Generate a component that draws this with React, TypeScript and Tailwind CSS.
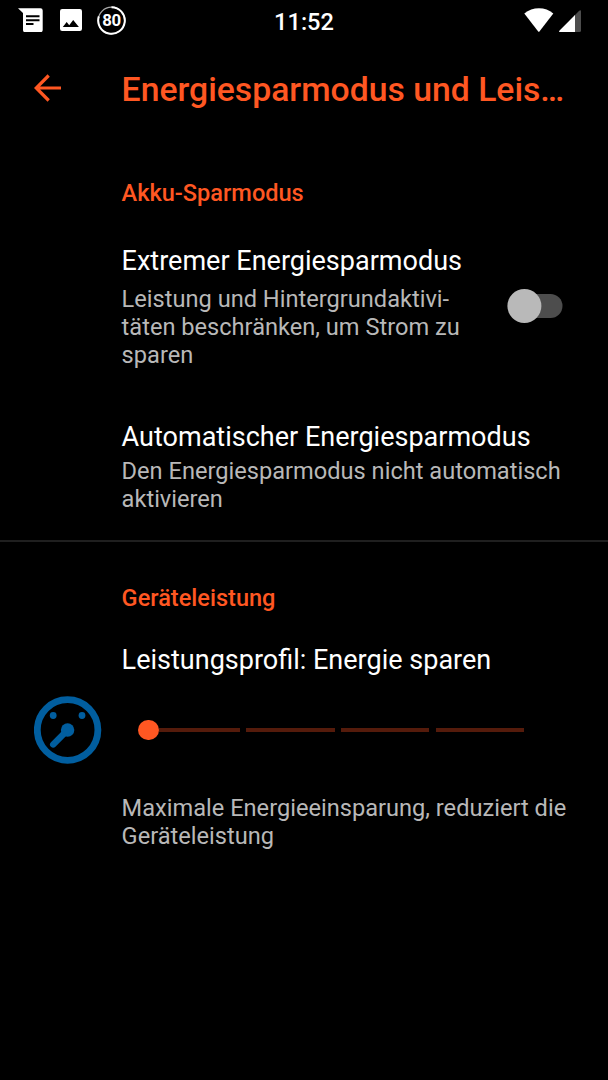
import React, { useState } from "react";

const StatusBar = () => (
  <header className="flex h-[42px] items-start justify-between pr-[27px] pl-[18px]">
    <div className="flex w-[240px] items-start">
      {/* Message */}
      <svg className="mt-2 h-6 w-[25px]" viewBox="0 0 25 24" fill="none">
        <path d="M0 0.3H22.5Q24.7 0.3 24.7 2.5V22Q24.7 24.2 22.5 24.2H7Q5 24.2 5 22V5Z" fill="#fff" />
        <path d="M8 8.3H21.5M8 12.2H21.5M8 16H15.5" stroke="#000" strokeWidth="1.9" />
      </svg>
      {/* Picture */}
      <svg className="mt-[9px] ml-[17px] h-[22px] w-[22px]" viewBox="0 0 22 22">
        <rect width="22" height="22" rx="2.2" fill="#fff" />
        <path d="M2.8 18L6.7 13L9.2 16.2L13.2 11L18.9 18Z" fill="#000" />
      </svg>
      {/* Battery ring */}
      <div className="mt-[6px] ml-[15px] grid h-[29px] w-[29px] place-items-center">
        <svg className="col-start-1 row-start-1 h-[29px] w-[29px]" viewBox="0 0 29 29" fill="none">
          <circle cx="14.5" cy="14.5" r="13.3" stroke="#aaa" strokeWidth="1.3" />
          <path d="M14.5 1.2A13.3 13.3 0 1 1 1.85 10.4" stroke="#fff" strokeWidth="2" />
        </svg>
        <span className="col-start-1 row-start-1 text-[16.8px] leading-none font-bold tracking-[-0.3px]">80</span>
      </div>
    </div>
    <span className="mt-[8px] ml-[9px] text-[23.6px] leading-[28px] font-medium">11:52</span>
    <div className="flex w-[240px] items-start justify-end gap-[5px]">
      <svg className="mt-2 h-6 w-[30px]" viewBox="0 0 30 24" fill="#fff">
        <path d="M0.3 5.4C8.5 -1.6 21.5 -1.6 29.3 5.4L15.6 23.2Q14.8 24.2 14 23.2Z" />
      </svg>
      <svg className="mt-[10px] h-[22px] w-[22px]" viewBox="0 0 22 22">
        <path d="M15.5 5.5L20.2 0.8Q22 -0.6 22 1.5V20.5Q22 22 20.5 22H15.5Z" fill="#4d4d4d" />
        <path d="M16 5V22H1.2Q-0.7 22 0.6 20.4Z" fill="#fff" />
      </svg>
    </div>
  </header>
);

const Gauge = () => (
  <svg className="h-[68px] w-[68px]" viewBox="0 0 68 68" fill="none">
    <circle cx="33.6" cy="34" r="30.3" stroke="#015e9f" strokeWidth="6.8" />
    <circle cx="19.2" cy="19.5" r="3.4" fill="#015e9f" />
    <circle cx="48" cy="19.5" r="3.4" fill="#015e9f" />
    <circle cx="33.6" cy="34" r="6.7" fill="#015e9f" />
    <path d="M33.6 34L19.2 48.4" stroke="#015e9f" strokeWidth="6.4" strokeLinecap="round" />
  </svg>
);

const Category = ({ children }: { children: React.ReactNode }) => (
  <h2 className="text-[23.55px] leading-[28px] font-medium text-[#ff5722]">{children}</h2>
);

const ItemTitle = ({ children }: { children: React.ReactNode }) => (
  <h3 className="text-[27.02px] leading-[32px] whitespace-nowrap">{children}</h3>
);

const Summary = ({ children }: { children: React.ReactNode }) => (
  <p className="text-[23.62px] leading-[28px] whitespace-nowrap text-[#b8b8b8]">{children}</p>
);

export default function App() {
  const [extreme, setExtreme] = useState(false);

  return (
    <div className="h-[1080px] w-[608px] overflow-hidden bg-black font-['Roboto',sans-serif] text-white">
      <StatusBar />

      <div className="flex h-[94px] items-start pt-[27px]">
        <button className="ml-[34px] w-[87.6px] pt-[5px]" aria-label="Zurück">
          <svg className="h-7 w-7" viewBox="0 0 28 28" fill="none" stroke="#ff5722" strokeWidth="3.2">
            <path d="M27 14H2M14.7 1.5L2.2 14L14.7 26.5" />
          </svg>
        </button>
        <h1 className="mt-px text-[33.72px] leading-[40px] font-medium whitespace-nowrap text-[#ff5722]">
          Energiesparmodus und Leis…
        </h1>
      </div>

      <main>
        <section className="h-[406px] border-b-2 border-[#1f1f1f] pt-[43px] pl-[121.6px]">
          <Category>Akku-Sparmodus</Category>

          <div className="mt-[38px] flex items-center justify-between pr-[45px]">
            <div>
              <ItemTitle>Extremer Energiesparmodus</ItemTitle>
              <div className="mt-2">
                <Summary>
                  Leistung und Hintergrundaktivi-
                  <br />
                  täten beschränken, um Strom zu
                  <br />
                  sparen
                </Summary>
              </div>
            </div>
            <button
              role="switch"
              aria-checked={extreme}
              onClick={() => setExtreme(!extreme)}
              className="mb-[3px] h-[34px] w-[56px]"
            >
              <svg className="h-[34px] w-[56px]" viewBox="0 0 56 34">
                <rect x="7" y="5" width="48.5" height="24" rx="12" fill="#4d4d4d" />
                <circle cx={extreme ? 38.5 : 17.4} cy="17" r="17" fill="#b9b9b9" />
              </svg>
            </button>
          </div>

          <div className="mt-[52px]">
            <ItemTitle>Automatischer Energiesparmodus</ItemTitle>
            <div className="mt-[4px]">
              <Summary>
                Den Energiesparmodus nicht automatisch
                <br />
                aktivieren
              </Summary>
            </div>
          </div>
        </section>

        <section className="pt-[42px]">
          <div className="pl-[121.6px]">
            <Category>Geräteleistung</Category>
            <div className="mt-[32px]">
              <ItemTitle>Leistungsprofil: Energie sparen</ItemTitle>
            </div>
          </div>

          <div className="mt-[20px] flex h-[68px] items-center pl-[34px]">
            <Gauge />
            <div className="ml-[36px] flex items-center">
              <span className="h-[20px] w-[21px] rounded-full bg-[#ff5722]" />
              <span className="h-1 w-[81px] bg-[#551b0b]" />
              <span className="ml-[6px] h-1 w-[89px] bg-[#551b0b]" />
              <span className="ml-[6px] h-1 w-[88px] bg-[#551b0b]" />
              <span className="ml-[7px] h-1 w-[88px] bg-[#551b0b]" />
            </div>
          </div>

          <div className="mt-[30px] pl-[121.6px]">
            <Summary>
              Maximale Energieeinsparung, reduziert die
              <br />
              Geräteleistung
            </Summary>
          </div>
        </section>
      </main>
    </div>
  );
}
